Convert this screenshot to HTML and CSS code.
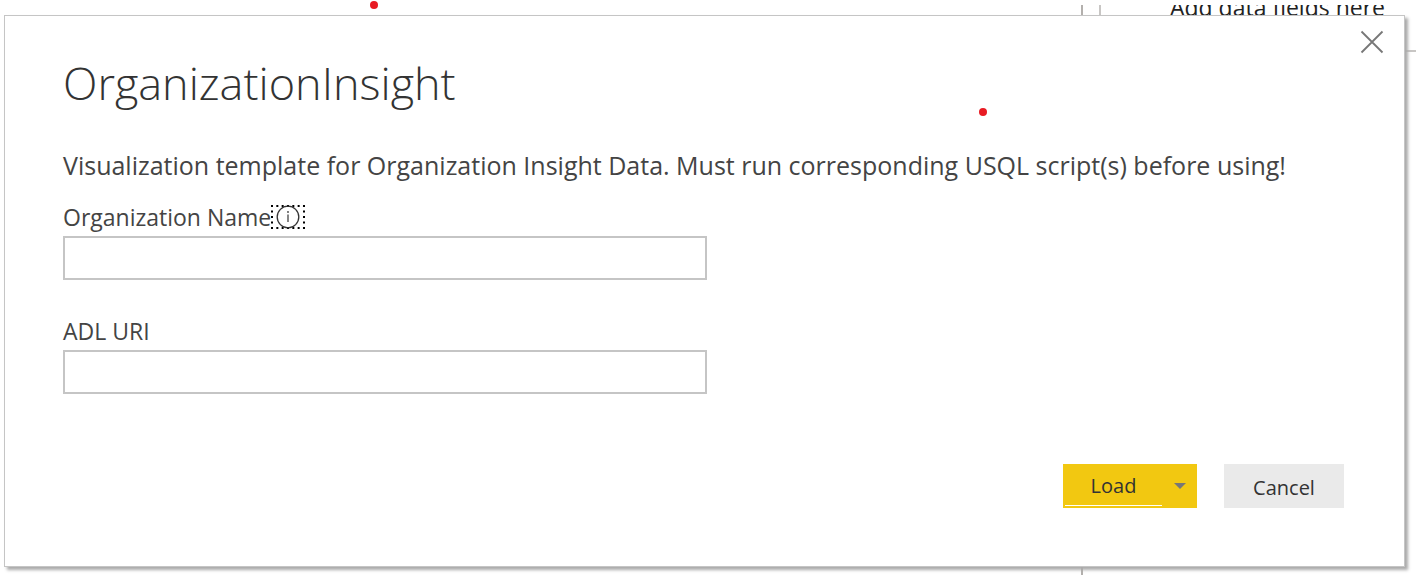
FILE: index.html
```
<!DOCTYPE html>
<html lang="en">
<head>
<meta charset="utf-8">
<title>OrganizationInsight</title>
<meta name="viewport" content="width=device-width, initial-scale=1">
<link rel="stylesheet" href="styles.css">
</head>
<body>
<div class="report">
  <span class="rule rule-pane"></span>
  <span class="rule rule-fields"></span>
  <span class="rule rule-section"></span>
  <span class="fields-hint">Add data fields here</span>
</div>
<span class="dot dot-page"></span>
<main class="dialog" role="dialog" aria-labelledby="dialog-title">
  <button class="close" type="button" aria-label="Close">
    <svg width="24" height="24" viewBox="0 0 24 24" aria-hidden="true"><path d="M1.5 1.5 22.5 22.5M22.5 1.5 1.5 22.5" fill="none" stroke="#777" stroke-width="1.8"/></svg>
  </button>
  <span class="dot dot-dialog"></span>
  <h1 class="title" id="dialog-title">OrganizationInsight</h1>
  <p class="description">Visualization template for Organization Insight Data. Must run corresponding USQL script(s) before using!</p>
  <form class="form">
    <div class="field">
      <div class="field-head">
        <label class="label" for="org-name">Organization Name</label>
        <button class="info" type="button" aria-label="About Organization Name">
          <svg width="34" height="24" viewBox="0 0 34 24" aria-hidden="true"><path d="M0 1H34M0 23H34" stroke="#000" stroke-width="2" stroke-dasharray="2 3.33"/><path d="M1 0V24M33 0V24" stroke="#000" stroke-width="2" stroke-dasharray="2 3.5"/><circle cx="17" cy="12" r="10.8" fill="none" stroke="#333" stroke-width="1.3"/><path d="M17 9.5V17" stroke="#444" stroke-width="1.3"/><circle cx="17" cy="7" r=".9" fill="#444"/></svg>
        </button>
      </div>
      <input class="input" id="org-name" type="text">
    </div>
    <div class="field">
      <div class="field-head"><label class="label" for="adl-uri">ADL URI</label></div>
      <input class="input" id="adl-uri" type="text">
    </div>
    <div class="actions">
      <div class="split">
        <button class="load" type="button">Load</button>
        <button class="load-menu" type="button" aria-label="More load options"><svg width="12" height="6" viewBox="0 0 12 6" aria-hidden="true"><path d="M0 0H12L6 6Z" fill="#777"/></svg></button>
      </div>
      <button class="cancel" type="button">Cancel</button>
    </div>
  </form>
</main>
</body>
</html>
```
FILE: styles.css
```
* {
  box-sizing: border-box;
}

body {
  position: relative;
  display: flex;
  min-height: 100vh;
  margin: 0;
  padding: 15px 11px 8px 4px;
  background: #fff;
  color: #444;
  font-family: "Open Sans", "Noto Sans", sans-serif;
}

button {
  padding: 0;
  border: 0;
  background: none;
  color: #333;
  font: inherit;
}

svg {
  display: block;
}

/* Report canvas behind the dialog */
.report {
  position: absolute;
  inset: 0;
  overflow: hidden;
  clip-path: inset(5px 0 0 0);
}

.rule {
  position: absolute;
  background: #b3b0ad;
}

.rule-pane {
  top: 0;
  bottom: 0;
  right: 333px;
  width: 2px;
}

.rule-fields {
  top: 0;
  right: 315px;
  width: 2px;
  height: 20px;
  background: #c8c6c4;
}

.rule-section {
  top: 50px;
  right: 0;
  width: 20px;
  height: 2px;
  background: #c8c6c4;
}

.fields-hint {
  position: absolute;
  top: -7px;
  right: 31px;
  color: #222;
  font-size: 23px;
  line-height: 28px;
  white-space: nowrap;
}

.dot {
  position: absolute;
  width: 8px;
  height: 8px;
  border-radius: 50%;
  background: #e81b23;
}

.dot-page {
  top: 1px;
  left: 370px;
}

.dot-dialog {
  top: 92px;
  right: 417px;
}

.dialog {
  position: relative;
  flex: 1;
  padding: 35px 60px 58px 58px;
  border: 1px solid #c5c5c5;
  background: #fff;
  box-shadow: 3px 3px 3px #aaa;
}

.close {
  position: absolute;
  top: 14px;
  right: 20px;
}

.title {
  margin: 0;
  color: #333;
  font-size: 45px;
  font-weight: 300;
  line-height: 64px;
}

.description {
  margin: 32px 0 18px;
  font-size: 25px;
  line-height: 36px;
}

.field {
  max-width: 644px;
  margin-bottom: 35px;
}

.field-head {
  display: flex;
  align-items: center;
  margin-bottom: 3px;
}

.label {
  font-size: 23px;
  line-height: 32px;
}

.input {
  display: block;
  width: 100%;
  height: 44px;
  padding: 4px 12px;
  border: 2px solid #c5c5c5;
  outline: 0;
  background: #fff;
  color: #333;
  font: inherit;
  font-size: 22px;
}

.actions {
  display: flex;
  justify-content: flex-end;
  gap: 27px;
  margin-top: 70px;
  font-size: 20px;
  line-height: 28px;
}

.split {
  display: flex;
  width: 134px;
  height: 44px;
  background: #f2c811;
}

.load {
  flex: 1;
  margin: 2px 0 2px 2px;
  padding-top: 1px;
  border-bottom: 1px solid #fff;
}

.load-menu {
  display: flex;
  align-items: center;
  justify-content: center;
  width: 35px;
}

.cancel {
  width: 120px;
  height: 44px;
  padding-top: 3px;
  background: #eaeaea;
}
```
